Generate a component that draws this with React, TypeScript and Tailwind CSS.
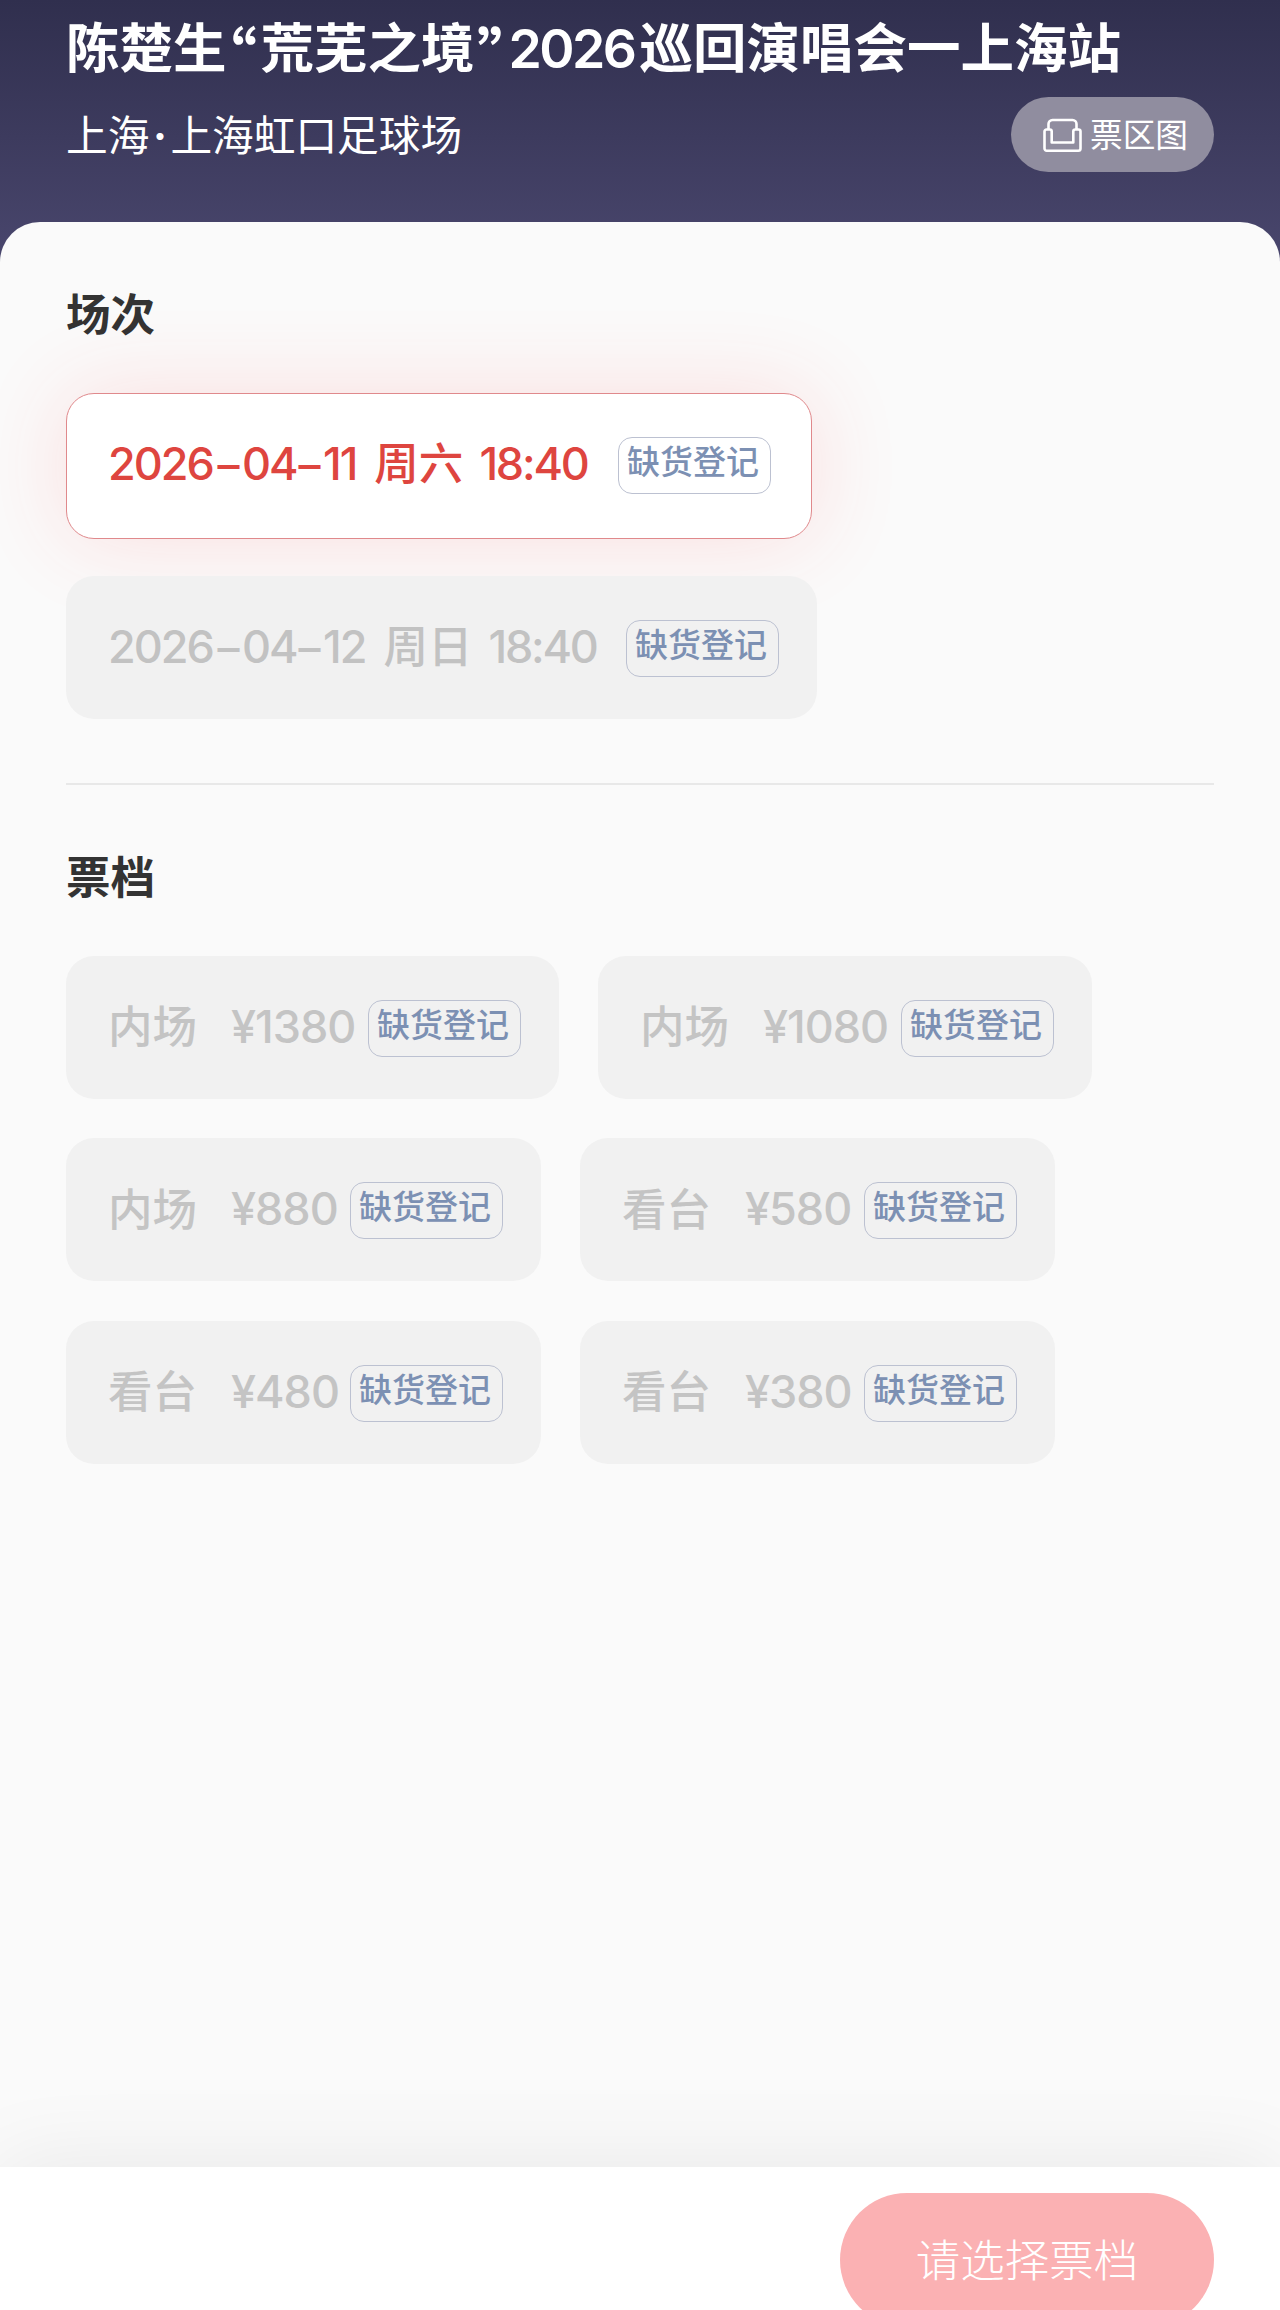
interface Session {
    id: number;
    date: Array<string>;
    week: string;
    time: string;
    active: boolean;
}

interface Ticket {
    id: number;
    area: string;
    price: string;
    width: string;
}

const listSession: Array<Session> = [
    { id: 1, date: ["2026", "04", "11"], week: "周六", time: "18:40", active: true },
    { id: 2, date: ["2026", "04", "12"], week: "周日", time: "18:40", active: false },
];

const listTicket: Array<Array<Ticket>> = [
    [
        { id: 1, area: "内场", price: "¥1380", width: "w-[137px]" },
        { id: 2, area: "内场", price: "¥1080", width: "w-[138px]" },
    ],
    [
        { id: 3, area: "内场", price: "¥880", width: "w-[119px]" },
        { id: 4, area: "看台", price: "¥580", width: "w-[119px]" },
    ],
    [
        { id: 5, area: "看台", price: "¥480", width: "w-[119px]" },
        { id: 6, area: "看台", price: "¥380", width: "w-[119px]" },
    ],
];

const SeatIcon = () => {
    return (
        <svg className="h-[34px] w-[39px]" viewBox="0 0 39 34" fill="none" stroke="currentColor" strokeWidth="2.6" strokeLinejoin="round">
            <path d="M5.500 11.500V6a4 4 0 0 1 4-4h20a4 4 0 0 1 4 4v5.500" />
            <path d="M8.700 13.500v11h21.600v-11a2 2 0 0 1 2-2h3.200a2 2 0 0 1 2 2v17a2.200 2.200 0 0 1-2.200 2.200H3.700a2.200 2.200 0 0 1-2.200-2.200v-17a2 2 0 0 1 2-2h3.200a2 2 0 0 1 2 2z" />
        </svg>
    );
};

const Tag = () => {
    return (
        <span className="flex h-[57px] w-[153px] shrink-0 justify-center rounded-[14px] border-[1.5px] border-[#bcc1d1] pr-[3px] pt-[7px] text-[33px] font-medium leading-[34px] text-[#7c90b3]">
            缺货登记
        </span>
    );
};

const Header = () => {
    return (
        <header className="h-[270px] bg-linear-to-b from-[#302f4e] to-[#4a476e] pl-[66px] pr-[66px] text-white">
            <h1 className="flex h-[98px] items-center whitespace-nowrap text-[53.5px] font-semibold">
                <span>陈楚生</span>
                <span className="flex w-[34px] justify-center pr-[3px] pt-[5px] font-['Noto_Sans_CJK_SC',sans-serif] text-[60px] leading-[76px] [font-feature-settings:'halt']">“</span>
                <span>荒芜之境</span>
                <span className="flex w-[34px] justify-center pl-[1px] pt-[5px] font-['Noto_Sans_CJK_SC',sans-serif] text-[60px] leading-[76px] [font-feature-settings:'halt']">”</span>
                <span className="w-[131px] tracking-[-2.6px]">2026</span>
                <span>巡回演唱会一上海站</span>
            </h1>
            <div className="flex h-[73px] items-center justify-between">
                <p className="flex pt-[3px] text-[41.7px]">
                    <span>上海</span>
                    <span className="w-[21px] text-center font-bold">·</span>
                    <span>上海虹口足球场</span>
                </p>
                <button className="flex h-[75px] w-[203px] items-center gap-[8px] rounded-full bg-[#908d9f] pl-[32px]">
                    <SeatIcon />
                    <span className="pt-[2px] text-[32.7px]">票区图</span>
                </button>
            </div>
        </header>
    );
};

const Dash = () => {
    return (
        <span className="flex w-[27px] justify-center pt-[2px] text-[44px] leading-[56px] tracking-normal">–</span>
    );
};

const SessionCard = (props: { item: Session }) => {
    const { item } = props;
    const [year, month, day] = item.date;

    return (
        <div
            className={
                item.active
                    ? "relative flex h-[146px] w-[746px] items-center justify-between rounded-[28px] border-[1.5px] border-[#e0898c] bg-white pb-[1px] pl-[41px] pr-[40px] text-[#de453f] shadow-[0_0_90px_rgba(255,60,60,0.14)]"
                    : "relative flex h-[143px] w-[751px] items-center justify-between rounded-[28px] bg-[#f1f1f1] pl-[42px] pr-[38px] pt-[2px] text-[#c2c2c2]"
            }
        >
            <div className="flex items-center whitespace-nowrap pb-[3px] text-[44.5px] font-medium">
                <span className="flex items-center text-[45px] leading-[62px] tracking-[-2px]">
                    <span className="w-[107px]">{year}</span>
                    <Dash />
                    <span className="w-[54px]">{month}</span>
                    <Dash />
                    <span>{day}</span>
                </span>
                <span className="ml-[18px] pt-[1px]">{item.week}</span>
                <span className="ml-[16px] text-[45px] tracking-[-2.2px] [font-feature-settings:'calt'_0]">{item.time}</span>
            </div>
            <Tag />
        </div>
    );
};

const TicketCard = (props: { item: Ticket }) => {
    const { item } = props;

    return (
        <div className="flex h-[143px] items-center rounded-[28px] bg-[#f1f1f1] pl-[42px] pr-[38px] pt-[2px] text-[44.5px] font-medium text-[#c4c4c4]">
            <span className="w-[89px] pb-[1px]">{item.area}</span>
            <span className={`ml-[34px] pb-[3px] text-[45px] tracking-[-1px] ${item.width}`}>{item.price}</span>
            <Tag />
        </div>
    );
};

const App = () => {
    return (
        <div className="flex h-[2310px] w-[1280px] flex-col overflow-hidden bg-[#fafafa] font-['Inter','Noto_Sans_CJK_SC',sans-serif]">
            <Header />
            <main className="relative -mt-[48px] flex-1 rounded-t-[40px] bg-[#fafafa] px-[66px] pt-[61px]">
                <h2 className="h-[64px] text-[44.5px] font-semibold leading-[64px] text-[#333]">场次</h2>
                <div className="mt-[46px] flex flex-col gap-[37px]">
                    {listSession.map(item => <SessionCard item={item} key={item.id} />)}
                </div>
                <div className="mt-[64px] h-[1.5px] bg-[#e8e8e8]" />
                <h2 className="mt-[61px] h-[64px] text-[44.5px] font-semibold leading-[64px] text-[#333]">票档</h2>
                <div className="mt-[46px] flex flex-col gap-[39.5px]">
                    {
                        listTicket.map((row, index) => {
                            return (
                                <div className="flex gap-[39px]" key={index}>
                                    {row.map(item => <TicketCard item={item} key={item.id} />)}
                                </div>
                            )
                        })
                    }
                </div>
            </main>
            <footer className="relative flex h-[143px] shrink-0 justify-end bg-white pr-[66px] pt-[26px] shadow-[0_0_90px_rgba(0,0,0,0.08)]">
                <button className="h-[134px] w-[374px] shrink-0 rounded-full bg-[#fbb1b3] pt-[2px] text-[44.5px] font-light text-white">请选择票档</button>
            </footer>
        </div>
    );
};

export default App;
